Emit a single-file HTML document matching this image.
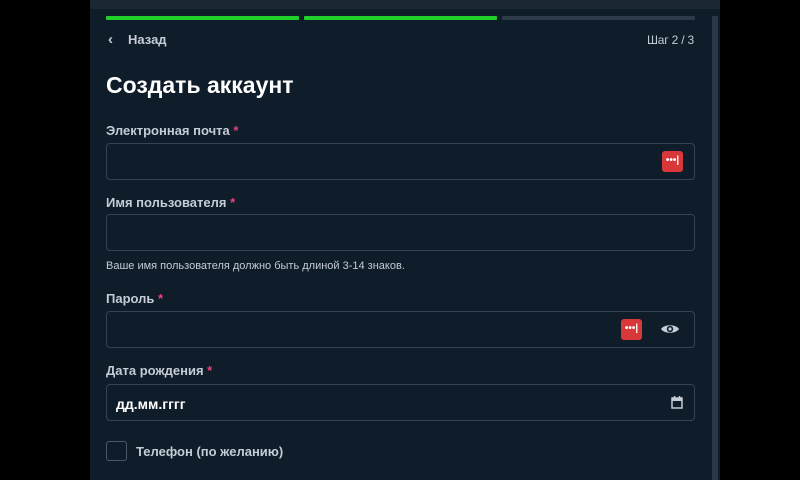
<!DOCTYPE html>
<html><head><meta charset="utf-8"><style>
*{margin:0;padding:0;box-sizing:border-box}
body{width:800px;height:480px;background:#000;font-family:"Liberation Sans",sans-serif;position:relative;overflow:hidden}
.panel{position:absolute;left:90px;top:0;width:630px;height:480px;background:#0f1c29}
.top{position:absolute;left:90px;top:0;width:630px;height:9px;background:#1b2834}
.sb{position:absolute;left:712px;top:16px;width:6px;height:464px;background:#2a3744}
.bar{position:absolute;top:16px;height:4px;border-radius:1px}
.t{position:absolute;color:#c4ccd6;font-size:13px;font-weight:bold}
.in{position:absolute;left:106px;width:589px;height:37px;border:1.5px solid #354352;border-radius:4px;background:#0f1c29}
.lp{position:absolute;width:21px;height:21px;background:#d9383a;border-radius:3px;color:#fff;font-size:10px;line-height:19px;text-align:center;font-weight:bold}
.st{color:#e0457a}
</style></head><body>
<div class="panel"></div><div class="top"></div><div class="sb"></div>
<div class="bar" style="left:106px;width:193px;background:#1fd12a"></div>
<div class="bar" style="left:304px;width:193px;background:#1fd12a"></div>
<div class="bar" style="left:502px;width:193px;background:#2d3b49"></div>
<div class="t" style="left:108px;top:31px;font-size:15px">‹</div>
<div class="t" style="left:128px;top:32px">Назад</div>
<div class="t" style="left:647px;top:33px;font-weight:normal;font-size:12px;letter-spacing:-0.2px">Шаг 2 / 3</div>
<div class="t" style="left:106px;top:72px;font-size:23px;color:#fff">Создать аккаунт</div>
<div class="t" style="left:106px;top:123px">Электронная почта <span class="st">*</span></div>
<div class="in" style="top:143px"></div>
<div class="lp" style="left:662px;top:151px">•••|</div>
<div class="t" style="left:106px;top:195px">Имя пользователя <span class="st">*</span></div>
<div class="in" style="top:214px"></div>
<div class="t" style="left:106px;top:260px;font-size:11px;font-weight:normal">Ваше имя пользователя должно быть длиной 3-14 знаков.</div>
<div class="t" style="left:106px;top:291px">Пароль <span class="st">*</span></div>
<div class="in" style="top:311px"></div>
<div class="lp" style="left:621px;top:319px">•••|</div>
<svg style="position:absolute;left:660px;top:321px" width="20" height="16" viewBox="0 0 20 16"><path d="M1 8C4 3 16 3 19 8C16 13 4 13 1 8Z" fill="#c4ccd6"/><circle cx="10" cy="8" r="3.2" fill="#0f1c29"/><circle cx="10" cy="8" r="1.6" fill="#c4ccd6"/></svg>
<div class="t" style="left:106px;top:363px">Дата рождения <span class="st">*</span></div>
<div class="in" style="top:384px"></div>
<div class="t" style="left:116px;top:396px;color:#fff;font-size:14px">дд.мм.гггг</div>
<svg style="position:absolute;left:671px;top:396px" width="12" height="13" viewBox="0 0 12 13"><rect x="1" y="2" width="10" height="10" fill="none" stroke="#c4ccd6" stroke-width="1.5"/><rect x="1" y="2" width="10" height="3" fill="#c4ccd6"/><path d="M3.5 0v3M8.5 0v3" stroke="#c4ccd6" stroke-width="1.5"/></svg>
<div style="position:absolute;left:106px;top:441px;width:21px;height:20px;border:1.5px solid #4a5866;border-radius:3px"></div>
<div class="t" style="left:136px;top:444px">Телефон (по желанию)</div>
</body></html>
